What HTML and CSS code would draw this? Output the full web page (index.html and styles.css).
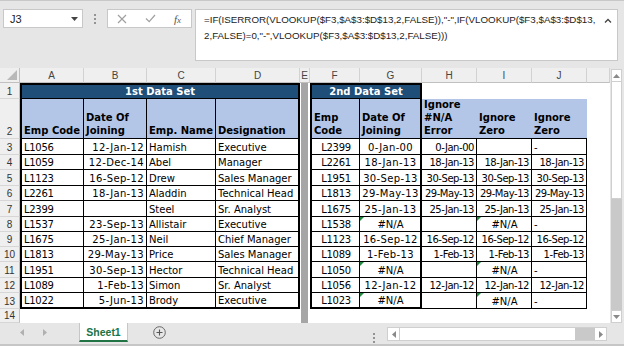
FILE: index.html
```html
<!DOCTYPE html>
<html>
<head>
<meta charset="utf-8">
<link rel="stylesheet" href="styles.css">
</head>
<body>
<div class="app">
  <div class="fbar">
    <div class="namebox"><span>J3</span><svg width="7" height="4" viewBox="0 0 7 4"><path d="M0 0h7L3.5 4z" fill="#444"/></svg></div>
    <div class="fdots"><svg width="2" height="10" viewBox="0 0 2 10"><circle cx="1" cy="1" r="1" fill="#777"/><circle cx="1" cy="5" r="1" fill="#777"/><circle cx="1" cy="9" r="1" fill="#777"/></svg></div>
    <div class="fbtns">
      <div class="fb"><svg width="10" height="10" viewBox="0 0 10 10"><path d="M1 1l8 8M9 1l-8 8" stroke="#a0a0a0" stroke-width="1.2"/></svg></div>
      <div class="fb"><svg width="11" height="9" viewBox="0 0 11 9"><path d="M1 4.5l3.2 3.2L10 1" stroke="#a0a0a0" fill="none" stroke-width="1.2"/></svg></div>
      <div class="fb fbx"><span class="fx">f<span class="fxs">x</span></span></div>
    </div>
    <div class="formula">
      <div class="ftext">=IF(ISERROR(VLOOKUP($F3,$A$3:$D$13,2,FALSE)),"-",IF(VLOOKUP($F3,$A$3:$D$13,<br>2,FALSE)=0,"-",VLOOKUP($F3,$A$3:$D$13,2,FALSE)))</div>
      <svg class="fcaret" width="8" height="5" viewBox="0 0 8 5"><path d="M1 4.5l3-3 3 3" stroke="#444" fill="none" stroke-width="1.3"/></svg>
    </div>
  </div>

  <div class="main">
    <div class="sheet">
      <!-- header row -->
      <div class="corner"><svg width="10" height="10" viewBox="0 0 10 10"><path d="M10 0v10H0z" fill="#b9b9b9"/></svg></div>
      <div class="ch">A</div><div class="ch">B</div><div class="ch">C</div><div class="ch">D</div><div class="ch">E</div><div class="ch">F</div><div class="ch">G</div><div class="ch">H</div><div class="ch">I</div><div class="ch">J</div><div class="ch"></div>

      <!-- row 1 -->
      <div class="rh">1</div>
      <div class="c hd1 s4 L R T bb">1st Data Set</div>
      <div class="e"></div>
      <div class="c hd1 s2 L R T bb">2nd Data Set</div>
      <div class="c"></div><div class="c"></div><div class="c"></div><div class="c"></div>

      <!-- row 2 -->
      <div class="rh">2</div>
      <div class="c hd2 L b">Emp Code</div>
      <div class="c hd2 b">Date Of<br>Joining</div>
      <div class="c hd2 b">Emp. Name</div>
      <div class="c hd2 R bb">Designation</div>
      <div class="e"></div>
      <div class="c hd2 L b">Emp<br>Code</div>
      <div class="c hd2 R bb">Date Of<br>Joining</div>
      <div class="c hd2 bb">Ignore<br>#N/A<br>Error</div>
      <div class="c hd2 bb">Ignore<br>Zero</div>
      <div class="c hd2 bb">Ignore<br>Zero</div>
      <div class="c"></div>

      <!-- row 3 -->
      <div class="rh">3</div>
      <div class="c L b id">L1056</div><div class="c b r dt">12-Jan-12</div><div class="c b">Hamish</div><div class="c R bb">Executive</div>
      <div class="e"></div>
      <div class="c L b m id">L2399</div><div class="c R bb m dt">0-Jan-00</div><div class="c b r dn">0-Jan-00</div><div class="c b"></div><div class="c b">-</div>
      <div class="c"></div>

      <!-- row 4 -->
      <div class="rh">4</div>
      <div class="c L b id">L1059</div><div class="c b r dt">12-Dec-14</div><div class="c b">Abel</div><div class="c R bb">Manager</div>
      <div class="e"></div>
      <div class="c L b m id">L2261</div><div class="c R bb m dt">18-Jan-13</div><div class="c b r dn">18-Jan-13</div><div class="c b r dn">18-Jan-13</div><div class="c b r dn">18-Jan-13</div>
      <div class="c"></div>

      <!-- row 5 -->
      <div class="rh">5</div>
      <div class="c L b id">L1123</div><div class="c b r dt">16-Sep-12</div><div class="c b">Drew</div><div class="c R bb">Sales Manager</div>
      <div class="e"></div>
      <div class="c L b m id">L1951</div><div class="c R bb m dt">30-Sep-13</div><div class="c b r dn">30-Sep-13</div><div class="c b r dn">30-Sep-13</div><div class="c b r dn">30-Sep-13</div>
      <div class="c"></div>

      <!-- row 6 -->
      <div class="rh">6</div>
      <div class="c L b id">L2261</div><div class="c b r dt">18-Jan-13</div><div class="c b">Aladdin</div><div class="c R bb">Technical Head</div>
      <div class="e"></div>
      <div class="c L b m id">L1813</div><div class="c R bb m dt">29-May-13</div><div class="c b r dn">29-May-13</div><div class="c b r dn">29-May-13</div><div class="c b r dn">29-May-13</div>
      <div class="c"></div>

      <!-- row 7 -->
      <div class="rh">7</div>
      <div class="c L b id">L2399</div><div class="c b r dt"></div><div class="c b">Steel</div><div class="c R bb">Sr. Analyst</div>
      <div class="e"></div>
      <div class="c L b m id">L1675</div><div class="c R bb m dt">25-Jan-13</div><div class="c b r dn">25-Jan-13</div><div class="c b r dn">25-Jan-13</div><div class="c b r dn">25-Jan-13</div>
      <div class="c"></div>

      <!-- row 8 -->
      <div class="rh">8</div>
      <div class="c L b id">L1537</div><div class="c b r dt">23-Sep-13</div><div class="c b">Allistair</div><div class="c R bb">Executive</div>
      <div class="e"></div>
      <div class="c L b m id">L1538</div><div class="c R bb m err">#N/A</div><div class="c b"></div><div class="c b m err">#N/A</div><div class="c b">-</div>
      <div class="c"></div>

      <!-- row 9 -->
      <div class="rh">9</div>
      <div class="c L b id">L1675</div><div class="c b r dt">25-Jan-13</div><div class="c b">Neil</div><div class="c R bb">Chief Manager</div>
      <div class="e"></div>
      <div class="c L b m id">L1123</div><div class="c R bb m dt">16-Sep-12</div><div class="c b r dn">16-Sep-12</div><div class="c b r dn">16-Sep-12</div><div class="c b r dn">16-Sep-12</div>
      <div class="c"></div>

      <!-- row 10 -->
      <div class="rh">10</div>
      <div class="c L b id">L1813</div><div class="c b r dt">29-May-13</div><div class="c b">Price</div><div class="c R bb">Sales Manager</div>
      <div class="e"></div>
      <div class="c L b m id">L1089</div><div class="c R bb m dt">1-Feb-13</div><div class="c b r dn">1-Feb-13</div><div class="c b r dn">1-Feb-13</div><div class="c b r dn">1-Feb-13</div>
      <div class="c"></div>

      <!-- row 11 -->
      <div class="rh">11</div>
      <div class="c L b id">L1951</div><div class="c b r dt">30-Sep-13</div><div class="c b">Hector</div><div class="c R bb">Technical Head</div>
      <div class="e"></div>
      <div class="c L b m id">L1050</div><div class="c R bb m err">#N/A</div><div class="c b"></div><div class="c b m err">#N/A</div><div class="c b">-</div>
      <div class="c"></div>

      <!-- row 12 -->
      <div class="rh">12</div>
      <div class="c L b id">L1089</div><div class="c b r dt">1-Feb-13</div><div class="c b">Simon</div><div class="c R bb">Sr. Analyst</div>
      <div class="e"></div>
      <div class="c L b m id">L1056</div><div class="c R bb m dt">12-Jan-12</div><div class="c b r dn">12-Jan-12</div><div class="c b r dn">12-Jan-12</div><div class="c b r dn">12-Jan-12</div>
      <div class="c"></div>

      <!-- row 13 -->
      <div class="rh">13</div>
      <div class="c L b B id">L1022</div><div class="c b B r dt">5-Jun-13</div><div class="c b B">Brody</div><div class="c R bb B">Executive</div>
      <div class="e"></div>
      <div class="c L b B m id">L1023</div><div class="c R bb B m err">#N/A</div><div class="c b"></div><div class="c b m err">#N/A</div><div class="c b">-</div>
      <div class="c"></div>

      <!-- row 14 -->
      <div class="rh">14</div>
      <div class="c s4"></div>
      <div class="e"></div>
      <div class="c s6"></div>
    </div>

    <div class="vscroll">
      <div class="sbtn"><svg width="7" height="4" viewBox="0 0 7 4"><path d="M0 4h7L3.5 0z" fill="#8a8a8a"/></svg></div>
      <div class="vthumb"></div>
      <div class="vtrough"></div>
      <div class="sbtn"><svg width="7" height="4" viewBox="0 0 7 4"><path d="M0 0h7L3.5 4z" fill="#8a8a8a"/></svg></div>
    </div>
  </div>

  <div class="tabbar">
    <div class="nav"><svg width="4" height="7" viewBox="0 0 4 7"><path d="M4 0v7L0 3.5z" fill="#b0b0b0"/></svg></div>
    <div class="nav nav2"><svg width="4" height="7" viewBox="0 0 4 7"><path d="M0 0v7l4-3.5z" fill="#b0b0b0"/></svg></div>
    <div class="tab">Sheet1</div>
    <div class="plus"><svg width="13" height="13" viewBox="0 0 13 13"><circle cx="6.5" cy="6.5" r="5.8" stroke="#666" fill="none" stroke-width="1"/><path d="M6.5 3.5v6M3.5 6.5h6" stroke="#555" stroke-width="1.1"/></svg></div>
    <div class="spacer"></div>
    <div class="tdots"><svg width="2" height="10" viewBox="0 0 2 10"><circle cx="1" cy="1" r="1" fill="#777"/><circle cx="1" cy="5" r="1" fill="#777"/><circle cx="1" cy="9" r="1" fill="#777"/></svg></div>
    <div class="hscroll">
      <div class="harrow"><svg width="4" height="7" viewBox="0 0 4 7"><path d="M4 0v7L0 3.5z" fill="#8a8a8a"/></svg></div>
      <div class="hthumb"></div>
      <div class="htrough"></div>
      <div class="harrow"><svg width="4" height="7" viewBox="0 0 4 7"><path d="M0 0v7l4-3.5z" fill="#8a8a8a"/></svg></div>
    </div>
  </div>
</div>
</body>
</html>
```

FILE: styles.css
```css
html, body {
  margin: 0;
  padding: 0;
}
body {
  width: 624px;
  height: 346px;
  overflow: hidden;
  background: #e6e6e6;
  font-family: "DejaVu Sans", sans-serif;
}
.app {
  width: 624px;
  height: 346px;
  display: flex;
  flex-direction: column;
}

/* formula bar */
.fbar {
  height: 68px;
  box-sizing: border-box;
  border-top: 1px solid #c8c8c8;
  padding: 8px 0 0 3px;
  display: flex;
  align-items: flex-start;
  flex: none;
}
.namebox {
  width: 80px;
  height: 19px;
  box-sizing: border-box;
  border: 1px solid #c8c8c8;
  background: #fff;
  display: flex;
  align-items: center;
  justify-content: space-between;
  padding: 0 4px 0 6px;
  font: 11px "Liberation Sans", sans-serif;
  color: #222;
}
.fdots {
  width: 24px;
  display: flex;
  justify-content: center;
  padding-top: 5px;
}
.fbtns {
  width: 85px;
  height: 19px;
  box-sizing: border-box;
  border: 1px solid #c8c8c8;
  background: #fff;
  display: flex;
}
.fb {
  width: 28px;
  display: flex;
  align-items: center;
  justify-content: center;
}
.fbx {
  flex: 1;
}
.fx {
  font: italic 11px "Liberation Serif", serif;
  color: #555;
}
.fxs {
  font-size: 9px;
}
.formula {
  margin-left: 3px;
  width: 423px;
  height: 52px;
  box-sizing: border-box;
  border: 1px solid #c8c8c8;
  background: #fff;
  display: flex;
  justify-content: space-between;
  padding: 2px 5px 0 8px;
}
.ftext {
  font: 9.75px "Liberation Sans", sans-serif;
  line-height: 16px;
  color: #222;
  white-space: nowrap;
}
.fcaret {
  margin-top: 6px;
}

/* main area */
.main {
  height: 255px;
  display: flex;
  flex: none;
}
.sheet {
  width: 610px;
  display: grid;
  grid-template-columns: 20px 64px 63px 69px 84px 10px 50px 62px 55px 55px 55px 23px;
  grid-template-rows: 15px 16px 40px 16px 15px 16px 15px 16px 15px 15px 15px 16px 15px 16px 14px;
  background: #fff;
}
.corner {
  background: #efefef;
  border-right: 1px solid #c0c0c0;
  border-bottom: 1px solid #c0c0c0;
  box-sizing: border-box;
  display: flex;
  align-items: flex-end;
  justify-content: flex-end;
  padding: 0 2px 2px 0;
}
.ch {
  background: #efefef;
  box-sizing: border-box;
  border-right: 1px solid #d2d2d2;
  border-bottom: 1px solid #c0c0c0;
  font: 10px "Liberation Sans", sans-serif;
  color: #444;
  display: flex;
  align-items: center;
  justify-content: center;
}
.rh {
  background: #efefef;
  box-sizing: border-box;
  border-right: 1px solid #c0c0c0;
  border-bottom: 1px solid #d6d6d6;
  font: 10px "Liberation Sans", sans-serif;
  color: #333;
  display: flex;
  align-items: flex-end;
  justify-content: center;
  padding-bottom: 1px;
}
.e {
  background: #a6a6a6;
  box-sizing: border-box;
  border-left: 1px solid #fff;
  border-right: 2px solid #fff;
}
.c {
  position: relative;
  box-sizing: border-box;
  display: flex;
  align-items: center;
  padding: 1px 1px 0 2px;
  font-size: 10px;
  color: #000;
  white-space: nowrap;
  overflow: hidden;
  background: #fff;
}
.s2 { grid-column: span 2; }
.s4 { grid-column: span 4; }
.s6 { grid-column: span 6; }

.b { border-right: 1px solid #000; border-bottom: 1px solid #000; }
.bb { border-bottom: 1px solid #000; }
.L { border-left: 2px solid #000; }
.R { border-right: 2px solid #000; }
.T { border-top: 2px solid #000; }
.B { border-bottom: 2px solid #000; }

.r { justify-content: flex-end; padding-right: 2px; }
.m { justify-content: center; }
.dt { letter-spacing: 0.35px; }
.dn { letter-spacing: -0.45px; }
.id { letter-spacing: -0.3px; }

.hd1 {
  background: #1f4e78;
  color: #fff;
  font-weight: bold;
  justify-content: center;
  padding: 0;
}
.hd2 {
  background: #b4c6e7;
  font-weight: bold;
  align-items: flex-end;
  line-height: 13px;
  padding: 0 1px 1px 2px;
}
.err::before {
  content: "";
  position: absolute;
  left: 0;
  top: 0;
  border-top: 4px solid #1e8c3c;
  border-right: 4px solid transparent;
}

/* vertical scrollbar */
.vscroll {
  width: 14px;
  box-sizing: border-box;
  padding: 1px 2px 0 1px;
  display: flex;
  flex-direction: column;
  background: #e6e6e6;
}
.sbtn {
  height: 13px;
  flex: none;
  background: #fff;
  border: 1px solid #cfcfcf;
  box-sizing: border-box;
  display: flex;
  align-items: center;
  justify-content: center;
}
.vthumb {
  height: 117px;
  flex: none;
  background: #fff;
  border: 1px solid #cfcfcf;
  border-top: none;
  box-sizing: border-box;
}
.vtrough {
  flex: 1;
  background: #c9c9c9;
}

/* tab bar */
.tabbar {
  height: 23px;
  box-sizing: border-box;
  border-bottom: 2px solid #c6c6c6;
  display: flex;
  align-items: flex-start;
  padding-left: 20px;
  flex: none;
}
.nav {
  width: 4px;
  height: 19px;
  display: flex;
  align-items: center;
}
.nav2 {
  margin-left: 19px;
}
.tab {
  margin-left: 32px;
  width: 49px;
  height: 19px;
  box-sizing: border-box;
  background: #fff;
  border-left: 1px solid #c6c6c6;
  border-right: 1px solid #c6c6c6;
  border-bottom: 2px solid #217346;
  color: #217346;
  font: bold 10.5px "Liberation Sans", sans-serif;
  display: flex;
  align-items: center;
  justify-content: center;
  padding-top: 1px;
}
.plus {
  margin-left: 25px;
  width: 13px;
  height: 19px;
  display: flex;
  align-items: center;
}
.spacer {
  flex: 1;
}
.tdots {
  width: 4px;
  padding-top: 5px;
  margin-right: 10px;
}
.hscroll {
  margin-top: 4px;
  width: 220px;
  height: 14px;
  box-sizing: border-box;
  border: 1px solid #cfcfcf;
  background: #fff;
  display: flex;
  margin-right: 17px;
}
.harrow {
  width: 11px;
  display: flex;
  align-items: center;
  justify-content: center;
  flex: none;
}
.hthumb {
  width: 176px;
  flex: none;
  border-left: 1px solid #cfcfcf;
  box-sizing: border-box;
}
.htrough {
  flex: 1;
  background: #c9c9c9;
}
```
